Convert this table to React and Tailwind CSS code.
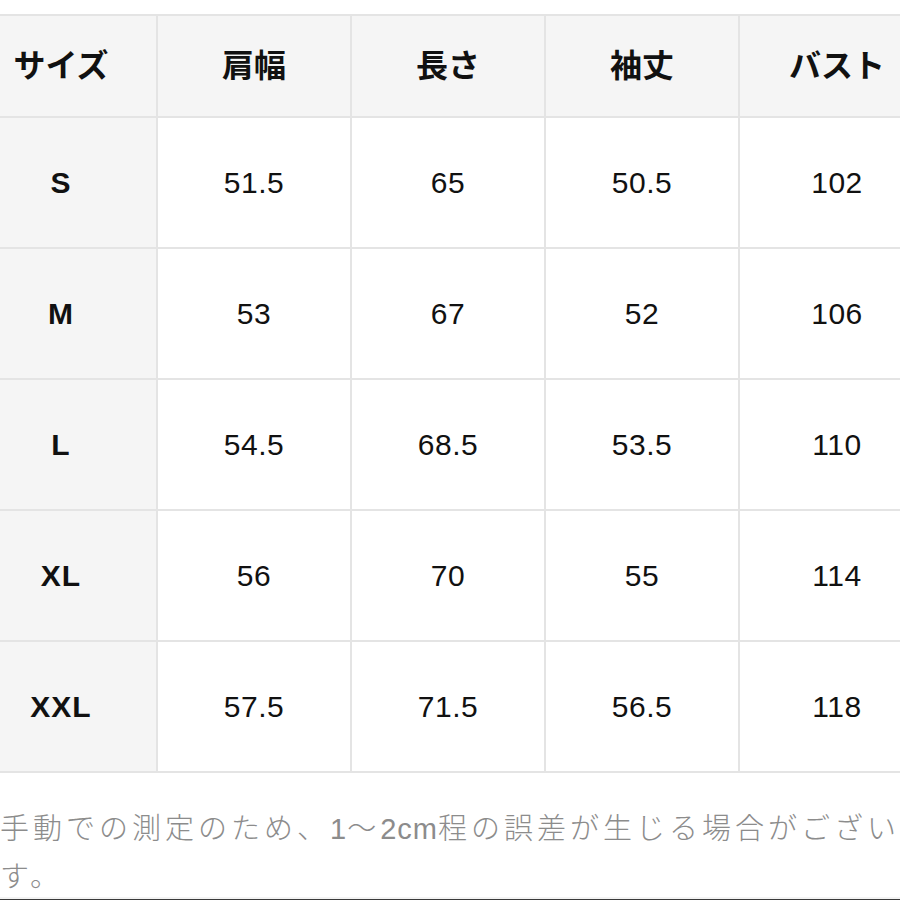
import React from 'react';

const headers = ['サイズ', '肩幅', '長さ', '袖丈', 'バスト'];

const rows = [
  ['S', '51.5', '65', '50.5', '102'],
  ['M', '53', '67', '52', '106'],
  ['L', '54.5', '68.5', '53.5', '110'],
  ['XL', '56', '70', '55', '114'],
  ['XXL', '57.5', '71.5', '56.5', '118'],
];

const jp = { fontFamily: '"Noto Sans CJK JP", "Noto Sans", sans-serif' };
const latin = { fontFamily: '"Liberation Sans", Arial, sans-serif' };

export default function App() {
  return (
    <div className="w-[900px] h-[900px] overflow-hidden bg-white flex flex-col">
      <div className="pt-[14px] flex-1">
        <div className="ml-[-34px] w-[970px] grid grid-cols-[192px_194px_194px_194px_196px] border-t-2 border-[#e4e4e4]">
          {headers.map((h) => (
            <div
              key={h}
              style={jp}
              className="h-[102px] pb-[6px] flex items-center justify-center bg-[#f5f5f5] border-r-2 border-b-2 border-[#e4e4e4] text-[32px] font-bold text-[#111]"
            >
              {h}
            </div>
          ))}
          {rows.map((r) =>
            r.map((v, i) => (
              <div
                key={r[0] + i}
                style={latin}
                className={
                  i === 0
                    ? 'h-[131px] flex items-center justify-center bg-[#f5f5f5] border-r-2 border-b-2 border-[#e4e4e4] text-[30px] font-bold tracking-[1px] text-[#111]'
                    : 'h-[131px] flex items-center justify-center bg-white border-r-2 border-b-2 border-[#e4e4e4] text-[30px] tracking-[0.5px] text-[#111]'
                }
              >
                {v}
              </div>
            ))
          )}
        </div>
        <div style={jp} className="mt-[31px] text-[29px] leading-[45px] tracking-[4px] text-[#8c8c8c] font-light whitespace-nowrap">
          <div>
            手動での測定のため、
            <span style={latin} className="tracking-[1px]">1</span>〜
            <span style={latin} className="tracking-[1px]">2cm</span>
            程の誤差が生じる場合がございます
          </div>
          <div>す。</div>
        </div>
      </div>
      <div className="h-[3px] bg-[#f3f3f3]" />
      <div className="h-px bg-[#3a3a3a]" />
    </div>
  );
}
